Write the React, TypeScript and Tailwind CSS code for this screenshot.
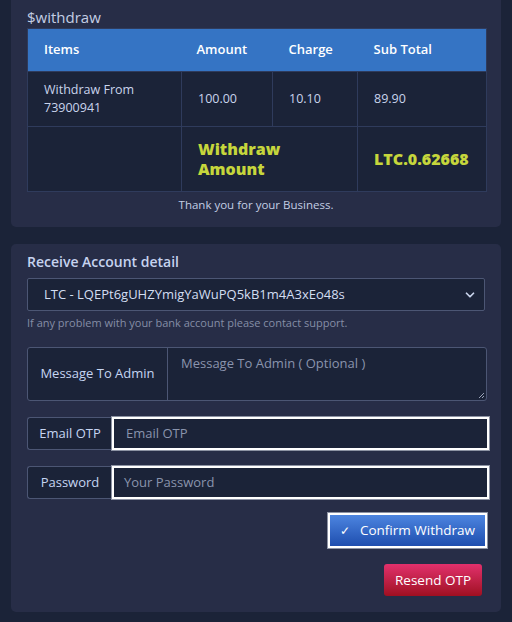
import { ChevronDown } from 'lucide-react'

const font = { fontFamily: '"Open Sans", "Noto Sans", sans-serif' }

export default function App() {
  return (
    <div style={font} className="min-h-[622px] w-[512px] bg-[#1b2338] px-[11px] pb-[10px] text-[#c9d4ec]">
      <section className="rounded-b-[5px] bg-[#272d47] px-4 pt-[7px] pb-[14px]">
        <h2 className="h-[21px] text-[15px] leading-[21px] text-[#c3cde4]">$withdraw</h2>
        <table className="w-[459px] table-fixed border-collapse text-[12.5px]">
          <colgroup>
            <col className="w-[154px]" />
            <col className="w-[91px]" />
            <col className="w-[85px]" />
            <col className="w-[129px]" />
          </colgroup>
          <thead>
            <tr className="h-[43px] bg-[#3574c4] text-left text-[13px] font-semibold text-white">
              <th className="border-y border-l border-[#2f3b5c] pl-[16px] font-semibold">Items</th>
              <th className="border-y border-[#2f3b5c] pl-[15px] font-semibold">Amount</th>
              <th className="border-y border-[#2f3b5c] pl-[16px] font-semibold">Charge</th>
              <th className="border-y border-r border-[#2f3b5c] pl-[16px] font-semibold">Sub Total</th>
            </tr>
          </thead>
          <tbody className="bg-[#1b2338]">
            <tr className="h-[55px]">
              <td className="border border-[#2f3b5c] pl-[16px] leading-[18px]">
                Withdraw From
                <br />
                73900941
              </td>
              <td className="border border-[#2f3b5c] pl-[16px]">100.00</td>
              <td className="border border-[#2f3b5c] pl-[16px]">10.10</td>
              <td className="border border-[#2f3b5c] pl-[16px]">89.90</td>
            </tr>
            <tr className="h-[65px]">
              <td className="border border-[#2f3b5c]"></td>
              <td colSpan={2} className="border border-[#2f3b5c] pl-[16px] text-[16px] leading-[20px] font-extrabold text-[#c6d63c]">
                Withdraw
                <br />
                Amount
              </td>
              <td className="border border-[#2f3b5c] pl-[16px] text-[16px] font-extrabold text-[#c6d63c]">LTC.0.62668</td>
            </tr>
          </tbody>
        </table>
        <p className="mt-[5px] text-center text-[11.5px] leading-[16px] text-[#c3cde4]">Thank you for your Business.</p>
      </section>

      <section className="mt-[17px] rounded-[5px] bg-[#272d47] px-4 pt-[9px] pb-[16px]">
        <h3 className="text-[14px] leading-[18px] font-semibold text-[#c6d3ef]">Receive Account detail</h3>
        <div className="mt-[7px] flex h-[33px] items-center justify-between rounded-[2px] border border-[#4c5674] bg-[#1b2338] pr-[7px] pl-[16px] text-[13px] text-[#d3def2]">
          <span>LTC - LQEPt6gUHZYmigYaWuPQ5kB1m4A3xEo48s</span>
          <ChevronDown size={14} strokeWidth={3} className="text-[#c9d4ec]" />
        </div>
        <p className="mt-[4px] text-[11px] leading-[16px] text-[#858ea6]">If any problem with your bank account please contact support.</p>

        <div className="mt-[16px] flex h-[54px] w-[460px] rounded-[3px] border border-[#4c5674] bg-[#1b2338]">
          <div className="flex w-[140px] items-center justify-center border-r border-[#4c5674] text-[13px] font-medium text-[#c6d5f2]">
            Message To Admin
          </div>
          <div className="relative flex-1 pt-[6px] pl-[13px] text-[13px] text-[#8a94ad]">
            Message To Admin ( Optional )
            <svg className="absolute right-[1px] bottom-[1px]" width="7" height="7" viewBox="0 0 7 7">
              <path d="M6 1 L1 6 M6 4 L4 6" stroke="#9aa3b8" strokeWidth="1" />
            </svg>
          </div>
        </div>

        <div className="mt-[16px] flex h-[33px] w-[462px]">
          <div className="flex w-[85px] items-center justify-center rounded-l-[3px] border border-r-0 border-[#4c5674] bg-[#1b2338] text-[13px] font-medium text-[#c6d5f2]">
            Email OTP
          </div>
          <div className="flex flex-1 items-center border-2 border-white bg-[#1b2338] pl-[12px] text-[13px] text-[#8a94ad] outline outline-1 outline-[#8d93a4]">
            Email OTP
          </div>
        </div>

        <div className="mt-[16px] flex h-[33px] w-[462px]">
          <div className="flex w-[85px] items-center justify-center rounded-l-[3px] border border-r-0 border-[#4c5674] bg-[#1b2338] text-[13px] font-medium text-[#c6d5f2]">
            Password
          </div>
          <div className="flex flex-1 items-center border-2 border-white bg-[#1b2338] pl-[10px] text-[13px] text-[#8a94ad] outline outline-1 outline-[#8d93a4]">
            Your Password
          </div>
        </div>

        <div className="-mr-[2px] mt-[14px] flex justify-end">
          <button className="flex h-[35px] w-[159px] items-center justify-center gap-[10px] border-2 border-white bg-gradient-to-b from-[#4d85e0] to-[#1f4eaf] text-[13.5px] text-white outline outline-1 outline-[#8d93a4]">
            <span className="text-[12px]">✓</span>
            Confirm Withdraw
          </button>
        </div>

        <div className="mt-[16px] flex justify-end pr-[3px]">
          <button className="h-[32px] w-[98px] rounded-[3px] bg-gradient-to-b from-[#e2306c] to-[#a00f20] text-[13.5px] text-white">
            Resend OTP
          </button>
        </div>
      </section>
    </div>
  )
}
